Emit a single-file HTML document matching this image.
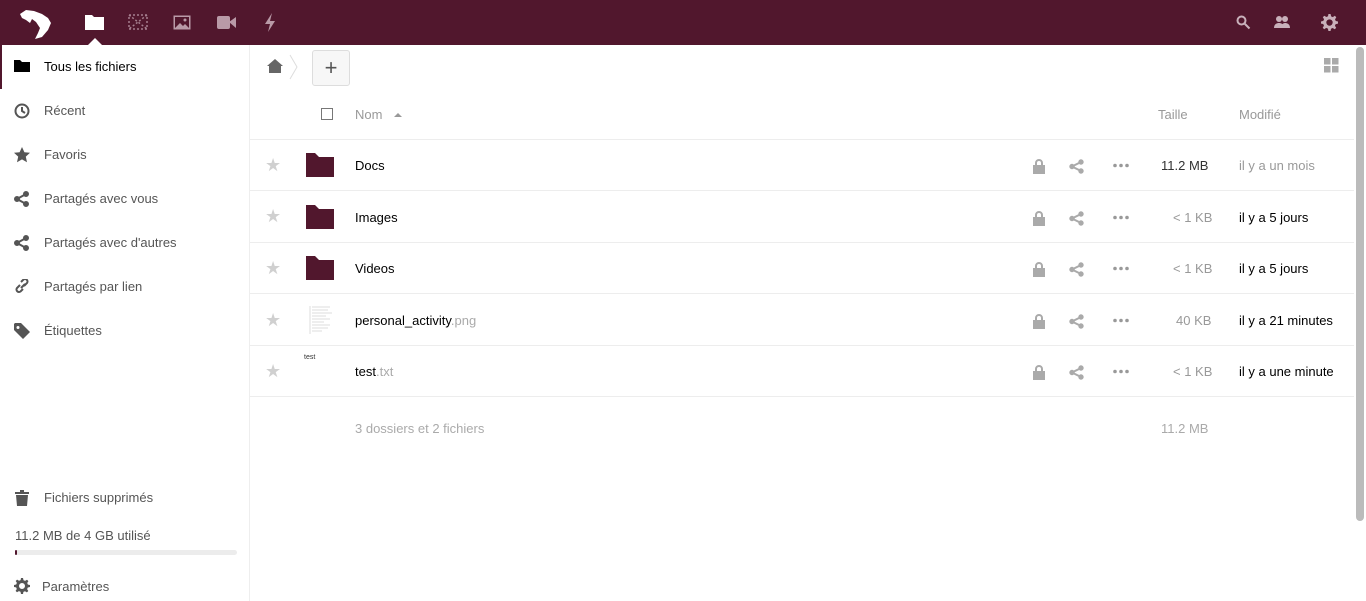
<!DOCTYPE html>
<html><head><meta charset="utf-8"><style>
*{box-sizing:border-box;margin:0;padding:0}
body{width:1366px;height:601px;overflow:hidden;background:#fff;font-family:"Liberation Sans",sans-serif;font-size:13px;color:#000;position:relative}
.hdr{position:absolute;left:0;top:0;width:1366px;height:45px;background:#51172d}
.ab{position:absolute}
.side{position:absolute;left:0;top:45px;width:250px;height:556px;border-right:1px solid #eee;background:#fff}
.nav{position:absolute;left:0;height:44px;width:249px;color:#555;line-height:44px}
.nav span{position:absolute;left:44px}
.nav svg{position:absolute;left:14px;top:14px}
.row{position:absolute;left:250px;width:1104px;border-bottom:1px solid #ededed}
.t{position:absolute;white-space:nowrap}
.g{color:#999}
.st{color:#d0d0d0!important}
</style></head><body>
<div class="hdr">
 <svg class="ab" style="left:18px;top:8px" width="38" height="32" viewBox="0 0 38 32"><path d="M2 6 L8 2 L16 3 L24 6 L30 10 L33 15 L30 22 L24 29 L17 31 L20 25 L22 20 L18 14 L14 11 L12 15 L8 12 L4 10Z M26 11 L28 14 L25 18 Z" fill="#fff"/></svg>
 <svg class="ab" style="left:85px;top:14px" width="19" height="16"><path d="M0 1h7l2 2h10v13H0z" fill="#fff"/></svg>
 <div class="ab" style="left:88px;top:38px;width:0;height:0;border-left:7px solid transparent;border-right:7px solid transparent;border-bottom:7px solid #fff"></div>
 <svg class="ab" style="left:128px;top:14px" width="20" height="16" fill="none" stroke="#a57e8e" stroke-width="1.5" stroke-dasharray="2 2"><rect x="1" y="1" width="18" height="14"/><path d="M1 1l18 14M19 1L1 15"/></svg>
 <svg class="ab" style="left:173px;top:15px" width="18" height="15"><rect x="0.5" y="0.5" width="17" height="14" fill="#b99aa7"/><rect x="2" y="2" width="14" height="11" fill="#51172d"/><path d="M2 13l5-5 3 3 2-2 4 4z" fill="#b99aa7"/><circle cx="12" cy="5" r="1.5" fill="#b99aa7"/></svg>
 <svg class="ab" style="left:217px;top:16px" width="19" height="13" fill="#b99aa7"><rect x="0" y="0" width="13" height="13" rx="2"/><path d="M12 6l7-5v11z"/></svg>
 <svg class="ab" style="left:264px;top:13px" width="12" height="19" fill="#b99aa7"><path d="M8 0L1 11h5l-2 8 7-11H6z"/></svg>
 <svg class="ab" style="left:1236px;top:15px" width="15" height="15" fill="none" stroke="#c8b0ba" stroke-width="2"><circle cx="5.5" cy="5.5" r="4"/><path d="M8.5 8.5l5 5"/></svg>
 <svg class="ab" style="left:1274px;top:15px" width="16" height="14" fill="#c8b0ba"><circle cx="5" cy="4" r="3"/><circle cx="11" cy="4" r="3"/><path d="M0 13c0-4 3-5 5-5s5 1 5 5zM7 13c0-3 2-5 4-5s5 1 5 5z"/></svg>
 <svg class="ab" style="left:1321px;top:14px" width="17" height="17" viewBox="0 0 16 16" fill="#c8b0ba"><path d="M7 0h2l.5 2.2 1.6.7 1.9-1.2 1.4 1.4-1.2 1.9.7 1.6L16 7v2l-2.2.5-.7 1.6 1.2 1.9-1.4 1.4-1.9-1.2-1.6.7L9 16H7l-.5-2.2-1.6-.7-1.9 1.2-1.4-1.4 1.2-1.9-.7-1.6L0 9V7l2.2-.5.7-1.6-1.2-1.9 1.4-1.4 1.9 1.2 1.6-.7zM8 5a3 3 0 100 6 3 3 0 000-6z"/></svg>
</div>
<div class="side">
 <div class="nav" style="top:0;color:#000;border-left:2px solid #51172d"><svg width="16" height="14" style="left:12px"><path d="M0 1h6l2 2h8v10H0z" fill="#000"/></svg><span style="left:42px">Tous les fichiers</span></div>
 <div class="nav" style="top:44px"><svg width="16" height="16" fill="none" stroke="#555" stroke-width="2"><circle cx="8" cy="8" r="6.5"/><path d="M8 4v4l3 2"/></svg><span>Récent</span></div>
 <div class="nav" style="top:88px"><svg width="16" height="16" fill="#555"><path d="M8 0l2.4 5.2 5.6.6-4.2 3.8 1.2 5.6L8 12.4 3 15.2l1.2-5.6L0 5.8l5.6-.6z"/></svg><span>Favoris</span></div>
 <div class="nav" style="top:132px"><svg width="16" height="16" fill="#555" stroke="#555" stroke-width="2"><circle cx="12" cy="3" r="2"/><circle cx="3" cy="8" r="2"/><circle cx="12" cy="13" r="2"/><path d="M12 3L3 8l9 5" fill="none"/></svg><span>Partagés avec vous</span></div>
 <div class="nav" style="top:176px"><svg width="16" height="16" fill="#555" stroke="#555" stroke-width="2"><circle cx="12" cy="3" r="2"/><circle cx="3" cy="8" r="2"/><circle cx="12" cy="13" r="2"/><path d="M12 3L3 8l9 5" fill="none"/></svg><span>Partagés avec d'autres</span></div>
 <div class="nav" style="top:220px"><svg width="16" height="16" fill="none" stroke="#555" stroke-width="2"><path d="M7 9l4-4M6 6L3 9a2.5 2.5 0 003.5 3.5L9 10M10 7l3-3a2.5 2.5 0 00-3.5-3.5L7 3"/></svg><span>Partagés par lien</span></div>
 <div class="nav" style="top:264px"><svg width="16" height="16" fill="#555"><path d="M0 1v6l9 9 7-7-9-9H1zM4 3a1.5 1.5 0 110 3 1.5 1.5 0 010-3z"/></svg><span>Étiquettes</span></div>
 <div class="nav" style="top:431px"><svg width="14" height="16" fill="#555" style="left:15px"><path d="M0 2h14v2H0zM5 0h4v2H5zM1 5h12l-1 11H2z"/></svg><span>Fichiers supprimés</span></div>
 <div class="t" style="left:15px;top:483px;color:#555">11.2 MB de 4 GB utilisé</div>
 <div class="ab" style="left:15px;top:505px;width:222px;height:5px;border-radius:3px;background:#ececec"><div style="width:2px;height:5px;background:#51172d;border-radius:2px"></div></div>
 <svg class="ab" style="left:14px;top:533px" width="16" height="16" viewBox="0 0 16 16" fill="#555"><path d="M7 0h2l.5 2.2 1.6.7 1.9-1.2 1.4 1.4-1.2 1.9.7 1.6L16 7v2l-2.2.5-.7 1.6 1.2 1.9-1.4 1.4-1.9-1.2-1.6.7L9 16H7l-.5-2.2-1.6-.7-1.9 1.2-1.4-1.4 1.2-1.9-.7-1.6L0 9V7l2.2-.5.7-1.6-1.2-1.9 1.4-1.4 1.9 1.2 1.6-.7zM8 5a3 3 0 100 6 3 3 0 000-6z"/></svg>
 <div class="t" style="left:42px;top:534px;color:#555">Paramètres</div>
</div>
<svg class="ab" style="left:267px;top:59px" width="16" height="14" fill="#666"><path d="M8 0l8 7h-2v7H2V7H0z"/></svg>
<svg class="ab" style="left:289px;top:54px" width="9" height="26" fill="none" stroke="#ddd"><path d="M1 1l7 12-7 12"/></svg>
<div class="ab" style="left:312px;top:50px;width:38px;height:36px;border:1px solid #ddd;border-radius:3px;background:#f7f7f7;color:#555;font-size:22px;line-height:33px;text-align:center">+</div>
<svg class="ab" style="left:1324px;top:58px" width="15" height="15" fill="#aaa"><rect x="0" y="0" width="6.5" height="6.5"/><rect x="8" y="0" width="6.5" height="6.5"/><rect x="0" y="8" width="6.5" height="6.5"/><rect x="8" y="8" width="6.5" height="6.5"/></svg>
<div class="ab" style="left:1356px;top:47px;width:8px;height:474px;background:#bbb;border-radius:4px"></div>
<div class="row" style="top:90px;height:50px">
 <div class="ab" style="left:71px;top:18px;width:12px;height:12px;border:1px solid #777"></div>
 <div class="t g" style="left:105px;top:17px">Nom</div>
 <div class="ab" style="left:144px;top:23px;border-left:4px solid transparent;border-right:4px solid transparent;border-bottom:4px solid #999"></div>
 <div class="t g" style="left:908px;top:17px">Taille</div>
 <div class="t g" style="left:989px;top:17px">Modifié</div>
</div>
<div class="row" style="top:140px;height:51px">
 <div class="t st" style="left:15px;top:15px;font-size:18px">★</div>
 <svg class="ab" style="left:56px;top:13px" width="28" height="24"><path d="M0 0h9l4 4h15v20H0z" fill="#51172d"/></svg>
 <div class="t" style="left:105px;top:18px">Docs</div>
 <div class="t" style="left:911px;top:18px;color:#333">11.2 MB</div>
 <div class="t g" style="left:989px;top:18px">il y a un mois</div>
</div>
<div class="row" style="top:191px;height:52px">
 <div class="t st" style="left:15px;top:15px;font-size:18px">★</div>
 <svg class="ab" style="left:56px;top:14px" width="28" height="24"><path d="M0 0h9l4 4h15v20H0z" fill="#51172d"/></svg>
 <div class="t" style="left:105px;top:19px">Images</div>
 <div class="t g" style="left:923px;top:19px">&lt; 1 KB</div>
 <div class="t" style="left:989px;top:19px">il y a 5 jours</div>
</div>
<div class="row" style="top:243px;height:51px">
 <div class="t st" style="left:15px;top:15px;font-size:18px">★</div>
 <svg class="ab" style="left:56px;top:13px" width="28" height="24"><path d="M0 0h9l4 4h15v20H0z" fill="#51172d"/></svg>
 <div class="t" style="left:105px;top:18px">Videos</div>
 <div class="t g" style="left:923px;top:18px">&lt; 1 KB</div>
 <div class="t" style="left:989px;top:18px">il y a 5 jours</div>
</div>
<div class="row" style="top:294px;height:52px">
 <div class="t st" style="left:15px;top:16px;font-size:18px">★</div>
 <svg class="ab" style="left:56px;top:10px" width="30" height="32" stroke="#ddd" stroke-width="1"><path d="M4 2v28M6 3h18M6 6h16M6 9h20M6 12h14M6 15h18M6 18h12M6 21h18M6 24h16M6 27h10"/></svg>
 <div class="t" style="left:105px;top:19px">personal_activity<span style="color:#aaa">.png</span></div>
 <div class="t g" style="left:926px;top:19px">40 KB</div>
 <div class="t" style="left:989px;top:19px">il y a 21 minutes</div>
</div>
<div class="row" style="top:346px;height:51px">
 <div class="t st" style="left:15px;top:15px;font-size:18px">★</div>
 <div class="t" style="left:54px;top:8px;font-size:7px;color:#333">test</div>
 <div class="t" style="left:105px;top:18px">test<span style="color:#aaa">.txt</span></div>
 <div class="t g" style="left:923px;top:18px">&lt; 1 KB</div>
 <div class="t" style="left:989px;top:18px">il y a une minute</div>
</div>
<div class="t" style="left:355px;top:421px;color:#aaa">3 dossiers et 2 fichiers</div>
<div class="t" style="left:1161px;top:421px;color:#aaa">11.2 MB</div>
<div style="position:absolute;left:0;top:0"><svg class="ab" style="left:1032px;top:158px" width="14" height="16" fill="#aaa"><path d="M3 7V5a4 4 0 018 0v2h-2V5a2 2 0 00-4 0v2zM1 7h12v9H1z"/></svg><svg class="ab" style="left:1069px;top:159px" width="16" height="15" fill="#aaa" stroke="#aaa" stroke-width="2"><circle cx="12" cy="3" r="1.7"/><circle cx="3" cy="7.5" r="1.7"/><circle cx="12" cy="12" r="1.7"/><path d="M12 3L3 7.5 12 12" fill="none"/></svg><svg class="ab" style="left:1113px;top:163px" width="16" height="5" fill="#999"><circle cx="2" cy="2.5" r="1.8"/><circle cx="8" cy="2.5" r="1.8"/><circle cx="14" cy="2.5" r="1.8"/></svg></div>
<div style="position:absolute;left:0;top:52px"><svg class="ab" style="left:1032px;top:158px" width="14" height="16" fill="#aaa"><path d="M3 7V5a4 4 0 018 0v2h-2V5a2 2 0 00-4 0v2zM1 7h12v9H1z"/></svg><svg class="ab" style="left:1069px;top:159px" width="16" height="15" fill="#aaa" stroke="#aaa" stroke-width="2"><circle cx="12" cy="3" r="1.7"/><circle cx="3" cy="7.5" r="1.7"/><circle cx="12" cy="12" r="1.7"/><path d="M12 3L3 7.5 12 12" fill="none"/></svg><svg class="ab" style="left:1113px;top:163px" width="16" height="5" fill="#999"><circle cx="2" cy="2.5" r="1.8"/><circle cx="8" cy="2.5" r="1.8"/><circle cx="14" cy="2.5" r="1.8"/></svg></div>
<div style="position:absolute;left:0;top:103px"><svg class="ab" style="left:1032px;top:158px" width="14" height="16" fill="#aaa"><path d="M3 7V5a4 4 0 018 0v2h-2V5a2 2 0 00-4 0v2zM1 7h12v9H1z"/></svg><svg class="ab" style="left:1069px;top:159px" width="16" height="15" fill="#aaa" stroke="#aaa" stroke-width="2"><circle cx="12" cy="3" r="1.7"/><circle cx="3" cy="7.5" r="1.7"/><circle cx="12" cy="12" r="1.7"/><path d="M12 3L3 7.5 12 12" fill="none"/></svg><svg class="ab" style="left:1113px;top:163px" width="16" height="5" fill="#999"><circle cx="2" cy="2.5" r="1.8"/><circle cx="8" cy="2.5" r="1.8"/><circle cx="14" cy="2.5" r="1.8"/></svg></div>
<div style="position:absolute;left:0;top:155px"><svg class="ab" style="left:1032px;top:158px" width="14" height="16" fill="#aaa"><path d="M3 7V5a4 4 0 018 0v2h-2V5a2 2 0 00-4 0v2zM1 7h12v9H1z"/></svg><svg class="ab" style="left:1069px;top:159px" width="16" height="15" fill="#aaa" stroke="#aaa" stroke-width="2"><circle cx="12" cy="3" r="1.7"/><circle cx="3" cy="7.5" r="1.7"/><circle cx="12" cy="12" r="1.7"/><path d="M12 3L3 7.5 12 12" fill="none"/></svg><svg class="ab" style="left:1113px;top:163px" width="16" height="5" fill="#999"><circle cx="2" cy="2.5" r="1.8"/><circle cx="8" cy="2.5" r="1.8"/><circle cx="14" cy="2.5" r="1.8"/></svg></div>
<div style="position:absolute;left:0;top:206px"><svg class="ab" style="left:1032px;top:158px" width="14" height="16" fill="#aaa"><path d="M3 7V5a4 4 0 018 0v2h-2V5a2 2 0 00-4 0v2zM1 7h12v9H1z"/></svg><svg class="ab" style="left:1069px;top:159px" width="16" height="15" fill="#aaa" stroke="#aaa" stroke-width="2"><circle cx="12" cy="3" r="1.7"/><circle cx="3" cy="7.5" r="1.7"/><circle cx="12" cy="12" r="1.7"/><path d="M12 3L3 7.5 12 12" fill="none"/></svg><svg class="ab" style="left:1113px;top:163px" width="16" height="5" fill="#999"><circle cx="2" cy="2.5" r="1.8"/><circle cx="8" cy="2.5" r="1.8"/><circle cx="14" cy="2.5" r="1.8"/></svg></div>
</body></html>
